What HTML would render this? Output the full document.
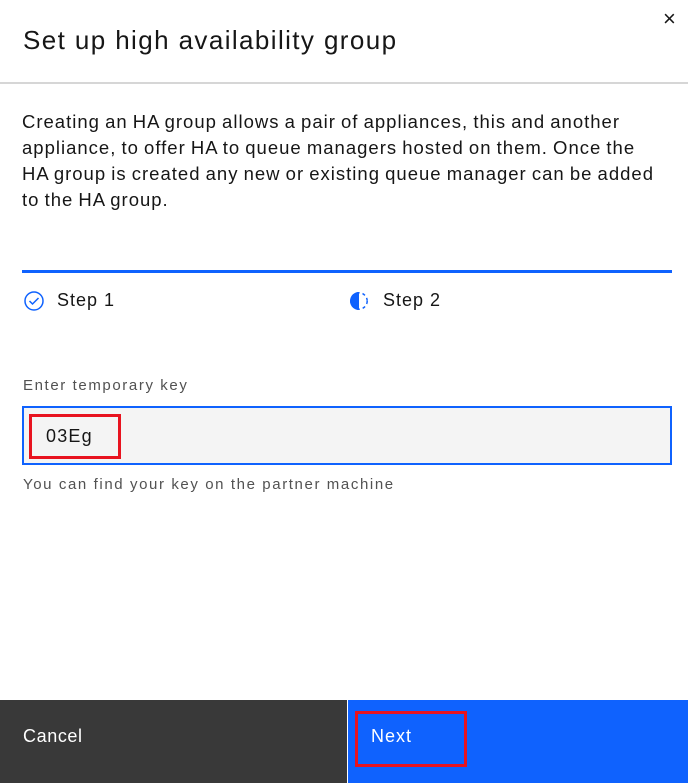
<!DOCTYPE html>
<html><head><style>
body{margin:0;width:688px;height:783px;position:relative;background:#fff;font-family:"Liberation Sans",sans-serif;color:#161616;overflow:hidden}
.a{position:absolute;white-space:nowrap}
</style></head><body>
<div class="a" style="left:23px;top:25px;font-size:26px;color:#161616;letter-spacing:1.4px">Set up high availability group</div>
<div class="a" style="left:663px;top:6px;font-size:22px;color:#161616">×</div>
<div class="a" style="left:0;top:82px;width:688px;height:2px;background:#d6d6d6"></div>
<div class="a" style="left:22px;top:109px;font-size:18.5px;line-height:26px;letter-spacing:1px;word-spacing:-1px">Creating an HA group allows a pair of appliances, this and another<br>appliance, to offer HA to queue managers hosted on them. Once the<br>HA group is created any new or existing queue manager can be added<br>to the HA group.</div>
<div class="a" style="left:22px;top:270px;width:650px;height:3px;background:#0f62fe"></div>
<svg class="a" style="left:23px;top:290px" width="22" height="22" viewBox="0 0 22 22"><circle cx="11" cy="11" r="9" fill="none" stroke="#0f62fe" stroke-width="1.5"/><path d="M6.5 11l3 3 6-6" fill="none" stroke="#0f62fe" stroke-width="1.5"/></svg>
<div class="a" style="left:57px;top:290px;font-size:18px;letter-spacing:1px">Step 1</div>
<svg class="a" style="left:348px;top:290px" width="22" height="22" viewBox="0 0 22 22"><path d="M11 2a9 9 0 0 0 0 18z" fill="#0f62fe"/><circle cx="11" cy="11" r="8.2" fill="none" stroke="#0f62fe" stroke-width="1.5" stroke-dasharray="3 3"/></svg>
<div class="a" style="left:383px;top:290px;font-size:18px;letter-spacing:1px">Step 2</div>
<div class="a" style="left:23px;top:377px;font-size:15px;color:#525252;letter-spacing:1.6px">Enter temporary key</div>
<div class="a" style="left:22px;top:406px;width:646px;height:55px;background:#f4f4f4;border:2px solid #0f62fe"></div>
<div class="a" style="left:29px;top:414px;width:86px;height:39px;border:3px solid #e8131f"></div>
<div class="a" style="left:46px;top:426px;font-size:18px;letter-spacing:1.2px">03Eg</div>
<div class="a" style="left:23px;top:476px;font-size:15px;color:#525252;letter-spacing:1.6px">You can find your key on the partner machine</div>
<div class="a" style="left:0;top:700px;width:347px;height:83px;background:#393939"></div>
<div class="a" style="left:348px;top:700px;width:340px;height:83px;background:#0f62fe"></div>
<div class="a" style="left:23px;top:726px;font-size:18px;color:#fff;letter-spacing:0.6px">Cancel</div>
<div class="a" style="left:371px;top:726px;font-size:18px;color:#fff;letter-spacing:1px">Next</div>
<div class="a" style="left:355px;top:711px;width:106px;height:50px;border:3px solid #e8131f"></div>
</body></html>
